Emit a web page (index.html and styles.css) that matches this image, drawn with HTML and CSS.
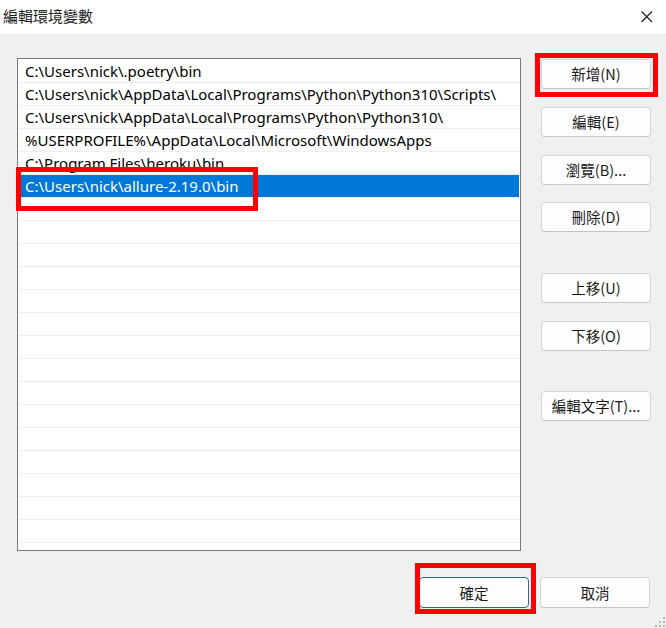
FILE: index.html
```html
<!DOCTYPE html>
<html lang="zh-Hant">
<head>
<meta charset="utf-8">
<title>編輯環境變數</title>
<link rel="stylesheet" href="styles.css">
</head>
<body>
<div class="window">
  <div class="titlebar">
    <span class="title">編輯環境變數</span>
    <svg class="close" width="12" height="12" viewBox="0 0 12 12"><path d="M0.5 0.5 L11 11 M11 0.5 L0.5 11" stroke="#1a1a1a" stroke-width="1.1" fill="none"/></svg>
  </div>
  <div class="content">
    <div class="list">
      <div class="row">C:\Users\nick\.poetry\bin</div>
      <div class="row">C:\Users\nick\AppData\Local\Programs\Python\Python310\Scripts\</div>
      <div class="row">C:\Users\nick\AppData\Local\Programs\Python\Python310\</div>
      <div class="row">%USERPROFILE%\AppData\Local\Microsoft\WindowsApps</div>
      <div class="row">C:\Program Files\heroku\bin</div>
      <div class="row selected">C:\Users\nick\allure-2.19.0\bin</div>
      <div class="row"></div><div class="row"></div><div class="row"></div><div class="row"></div>
      <div class="row"></div><div class="row"></div><div class="row"></div><div class="row"></div>
      <div class="row"></div><div class="row"></div><div class="row"></div><div class="row"></div>
      <div class="row"></div><div class="row"></div><div class="row"></div><div class="row"></div>
    </div>
    <div class="side">
      <button class="btn">新增(N)</button>
      <button class="btn gap">編輯(E)</button>
      <button class="btn gap">瀏覽(B)...</button>
      <button class="btn gap-s">刪除(D)</button>
      <button class="btn gap-l">上移(U)</button>
      <button class="btn gap">下移(O)</button>
      <button class="btn gap-m">編輯文字(T)...</button>
    </div>
  </div>
  <div class="footer">
    <button class="btn default">確定</button>
    <button class="btn">取消</button>
  </div>
  <div class="mark mark-new"></div>
  <div class="mark mark-sel"></div>
  <div class="mark mark-ok"></div>
  <div class="grip">
    <i style="left:8px;top:0"></i>
    <i style="left:4px;top:4px"></i><i style="left:8px;top:4px"></i>
    <i style="left:0;top:8px"></i><i style="left:4px;top:8px"></i><i style="left:8px;top:8px"></i>
  </div>
</div>
</body>
</html>
```
FILE: styles.css
```css
html, body {
  margin: 0;
  padding: 0;
}
body {
  width: 666px;
  height: 628px;
  overflow: hidden;
  background: #f0f0f0;
  font-family: "Noto Sans", "Noto Sans CJK TC", sans-serif;
}
.window {
  position: relative;
  width: 666px;
  height: 628px;
  background: #f0f0f0;
}
.titlebar {
  height: 34px;
  background: #ffffff;
  display: flex;
  align-items: center;
  justify-content: space-between;
  padding: 0 13px 0 3px;
  box-sizing: border-box;
}
.title {
  font-family: "Noto Sans CJK TC", sans-serif;
  font-size: 15px;
  color: #1a1a1a;
  margin-top: -4px;
}
.close {
  display: block;
  margin-top: -1px;
}
.content {
  display: flex;
  padding: 24px 0 0 17px;
}
.list {
  width: 504px;
  height: 493px;
  box-sizing: border-box;
  border: 1px solid #7a7a7a;
  background: #ffffff;
  overflow: hidden;
  padding-top: 1px;
}
.row {
  height: 22px;
  line-height: 22px;
  border-bottom: 1px solid #efefef;
  margin-left: 1px;
  padding-left: 6px;
  font-size: 15px;
  color: #000000;
  white-space: nowrap;
}
.row.selected {
  background: #0078d7;
  color: #ffffff;
  margin-left: 0;
  padding-left: 7px;
  margin-right: 1px;
}
.side {
  display: flex;
  flex-direction: column;
  margin-left: 20px;
  padding-top: 1px;
}
.btn {
  width: 110px;
  height: 30px;
  box-sizing: border-box;
  border: 1px solid #d5d5d5;
  border-bottom-color: #c4c4c4;
  border-radius: 4px;
  background: #fdfdfd;
  font-family: "Noto Sans CJK TC", sans-serif;
  font-size: 14.5px;
  color: #1a1a1a;
  padding: 0;
  line-height: 28px;
}
.gap { margin-top: 18px; }
.gap-s { margin-top: 17px; }
.gap-l { margin-top: 41px; }
.gap-m { margin-top: 40px; }
.footer {
  display: flex;
  justify-content: flex-end;
  gap: 11px;
  padding-right: 16px;
  margin-top: 26px;
}
.footer .btn {
  height: 31px;
}
.btn.default {
  border: 1px solid #2a6a94;
}
.mark {
  position: absolute;
  border: 5px solid #ff0000;
  box-sizing: border-box;
}
.mark-new { left: 535px; top: 53px; width: 123px; height: 44px; }
.mark-sel { left: 16px; top: 167px; width: 242px; height: 44px; }
.mark-ok { left: 415px; top: 563px; width: 121px; height: 51px; }
.grip {
  position: absolute;
  right: 1px;
  bottom: 1px;
  width: 10px;
  height: 10px;
}
.grip i {
  position: absolute;
  width: 2px;
  height: 2px;
  background: #b8b8b8;
}
```
